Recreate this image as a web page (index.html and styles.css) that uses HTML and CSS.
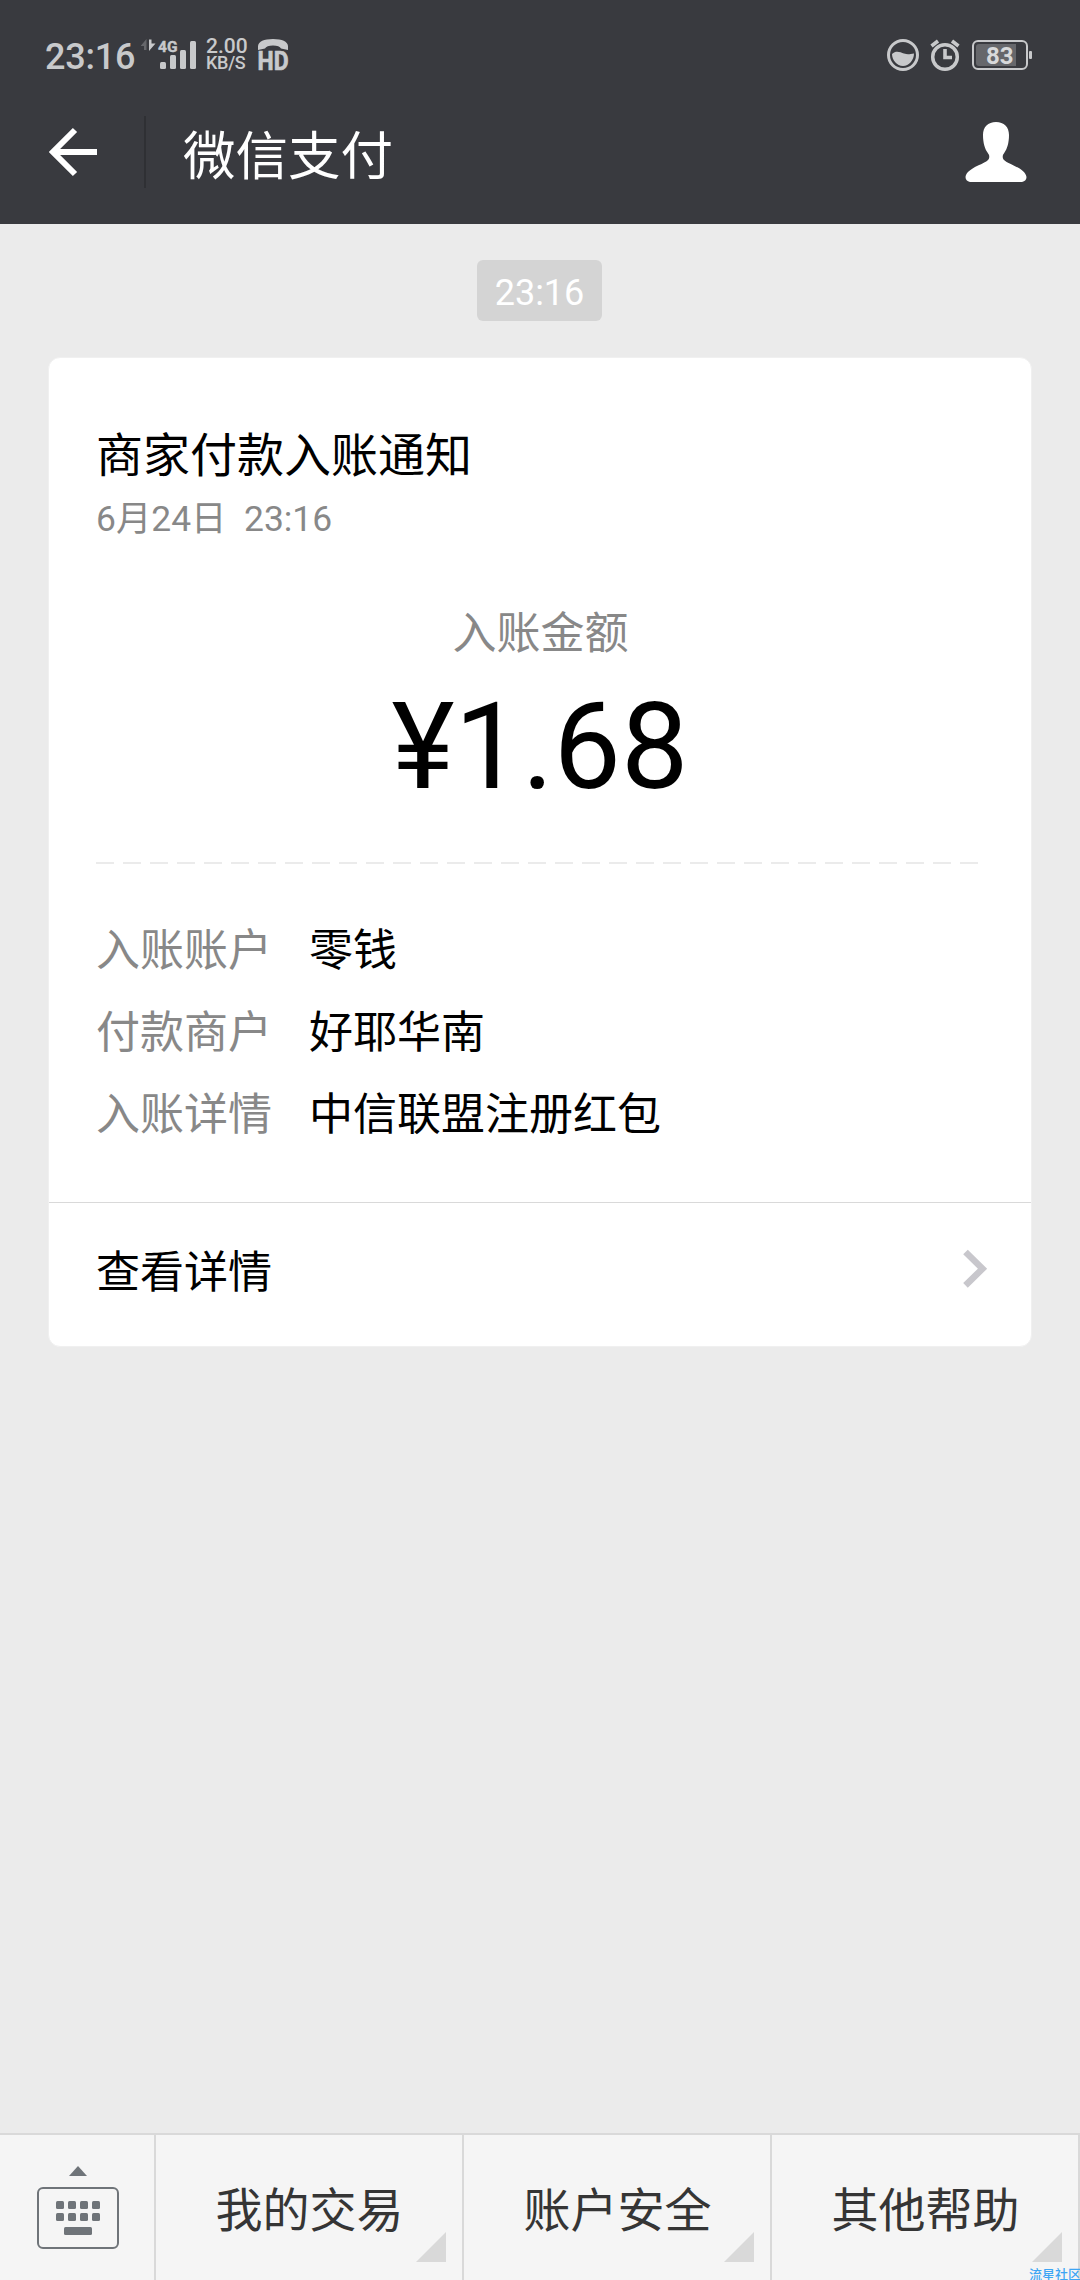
FILE: index.html
```html
<!DOCTYPE html>
<html lang="zh-CN">
<head>
<meta charset="utf-8">
<title>微信支付</title>
<link rel="stylesheet" href="styles.css">
</head>
<body>
<div class="screen">
  <header class="header">
    <div class="status">
      <span class="status-time">23:16</span>
      <svg class="status-signal" width="58" height="40" viewBox="141 35 58 40">
        <path d="M141 45.500L146.500 39V50H144V46H141z" fill="#66676b"/>
        <path d="M149 39.500H151.500V43.500H155.500L149 51z" fill="#c8c9cb"/>
        <text x="158" y="52" class="net-type">4G</text>
        <g fill="#c8c9cb">
          <rect x="160" y="62" width="6" height="7" rx="1.500"/>
          <rect x="170" y="55" width="6" height="14" rx="1.500"/>
          <rect x="180" y="50" width="6" height="19" rx="1.500"/>
          <rect x="190" y="41" width="6" height="28" rx="1.500"/>
        </g>
      </svg>
      <div class="speed"><span class="speed-value">2.00</span><span class="speed-unit">KB/S</span></div>
      <svg class="status-hd" width="34" height="40" viewBox="257 35 34 40">
        <path d="M258 50V46Q259 39 273 39T288 46V50L281 48.500Q279.500 45.500 273 45.500T265 48.500z" fill="#c8c9cb"/>
        <text x="257.500" y="69.800" class="hd" textLength="31" lengthAdjust="spacingAndGlyphs">HD</text>
      </svg>
      <svg class="status-icons" width="148" height="40" viewBox="886 35 148 40" fill="none" stroke="#c8c9cb">
        <circle cx="903" cy="55" r="14.500" stroke-width="3"/>
        <path d="M892 54C896 50 900 52 904 53.500S910 54 914 53.500C914 60 909 66 903 66S892 60 892 54z" fill="#c8c9cb" stroke="none"/>
        <circle cx="945" cy="57" r="12.300" stroke-width="3.500"/>
        <path d="M945 49V57.500H952" stroke-width="3.600"/>
        <path d="M931.500 46L938 41M958.500 46L952 41" stroke-width="3.600"/>
        <rect x="973" y="41" width="54" height="28" rx="5" stroke-width="2"/>
        <path d="M979 44H1016V66H979Q976 66 976 63V47Q976 44 979 44z" fill="#66676b" stroke="none"/>
        <rect x="1029" y="51" width="3" height="8" rx="1" fill="#c8c9cb" stroke="none"/>
        <text x="986" y="64" class="battery">83</text>
      </svg>
    </div>
    <div class="nav">
      <svg class="back" width="50" height="50" viewBox="48 127 50 50" fill="none" stroke="#fff" stroke-width="6"><path d="M75 130L53 152L75 174M54 152H97"/></svg>
      <i class="nav-line"></i>
      <h1 class="nav-title">微信支付</h1>
      <svg class="person" width="62" height="60" viewBox="965 122 62 60"><path d="M996 122C1004 122 1009 127 1009 135C1009 143 1007 149 1004.500 152.500Q1002 155.500 1003 158.500C1005 164 1025 167 1026.500 177Q1026.500 181 1022 182H970Q965.500 181 965.500 177C967 167 987 164 989 158.500Q990 155.500 987.500 152.500C985 149 983 143 983 135C983 127 988 122 996 122z" fill="#fff"/></svg>
    </div>
  </header>

  <main class="chat">
    <div class="stamp">23:16</div>
    <section class="card">
      <div class="card-main">
        <h2 class="card-title">商家付款入账通知</h2>
        <div class="card-date">6月24日  23:16</div>
        <div class="amount-label">入账金额</div>
        <div class="amount">¥1.68</div>
        <div class="dashes"></div>
        <dl class="details">
          <dt>入账账户</dt><dd>零钱</dd>
          <dt>付款商户</dt><dd>好耶华南</dd>
          <dt>入账详情</dt><dd>中信联盟注册红包</dd>
        </dl>
      </div>
      <div class="card-link">
        <span>查看详情</span>
        <svg width="26" height="40" viewBox="962 1249 26 40" fill="none" stroke="#c8c7cc" stroke-width="6.500"><path d="M965.500 1252L982.500 1268.700L965.500 1285.400"/></svg>
      </div>
    </section>
  </main>

  <footer class="menu">
    <div class="menu-key">
      <svg width="82" height="84" viewBox="37 2166 82 84" fill="#6f7479">
        <path d="M69 2176L78 2166L87 2176z"/>
        <rect x="38" y="2188" width="80" height="60" rx="5" fill="none" stroke="#6f7479" stroke-width="2"/>
        <rect x="56" y="2201" width="8" height="8" rx="1.500"/><rect x="68" y="2201" width="8" height="8" rx="1.500"/><rect x="80" y="2201" width="8" height="8" rx="1.500"/><rect x="92" y="2201" width="8" height="8" rx="1.500"/>
        <rect x="56" y="2213" width="8" height="8" rx="1.500"/><rect x="68" y="2213" width="8" height="8" rx="1.500"/><rect x="80" y="2213" width="8" height="8" rx="1.500"/><rect x="92" y="2213" width="8" height="8" rx="1.500"/>
        <rect x="64" y="2227" width="28" height="8" rx="1.500"/>
      </svg>
    </div>
    <div class="menu-item">我的交易</div>
    <div class="menu-item">账户安全</div>
    <div class="menu-item">其他帮助</div>
  </footer>
  <div class="watermark">流星社区</div>
</div>
</body>
</html>
```
FILE: styles.css
```css
* { box-sizing: border-box; margin: 0; padding: 0; }
body { background: #ebebeb; font-family: "Noto Sans CJK SC", sans-serif; }
.screen { position: relative; width: 1080px; height: 2280px; display: flex; flex-direction: column; overflow: hidden; }
h1, h2 { font-weight: 400; }
svg { display: block; flex: none; overflow: visible; }

/* Header */
.header { height: 224px; background: #393a3f; color: #fff; }
.status { height: 76px; padding: 35px 46px 0 45px; display: flex; align-items: flex-start; color: #c8c9cb; font-family: Roboto, sans-serif; }
.status-time { width: 96px; padding-top: 1px; font-size: 36px; line-height: 42px; font-weight: 500; letter-spacing: -0.2px; }
.status-signal { width: 58px; }
.speed { width: 52px; padding: 3px 0 0 7px; display: flex; flex-direction: column; font-weight: 500; }
.speed-value { font-size: 21px; line-height: 17px; }
.speed-unit { font-size: 18px; line-height: 16px; letter-spacing: -0.3px; }
.status-hd { margin-left: 6px; }
.status-icons { margin-left: auto; }
.net-type, .hd, .battery { fill: #c8c9cb; stroke: none; font-family: Roboto, sans-serif; font-weight: 700; }
.net-type { font-size: 15.5px; stroke: #c8c9cb; stroke-width: 0.4px; }
.hd { font-size: 25.5px; stroke: #c8c9cb; stroke-width: 0.7px; }
.battery { font-size: 24px; fill: #d8d9da; }

.nav { height: 148px; padding: 40px 53px 36px 48px; display: flex; }
.back { margin-top: 11px; }
.nav-line { width: 2px; height: 72px; margin-left: 46px; background: #2f3034; }
.nav-title { margin-left: 37px; font-size: 52.5px; line-height: 72px; }
.person { margin: 6px 0 0 auto; }

/* Conversation */
.chat { flex: 1; padding: 36px 48px 0; display: flex; flex-direction: column; align-items: center; }
.stamp { width: 125px; height: 61px; margin-right: 1px; border-radius: 6px; background: #d4d4d4; color: #fff; font: 36px/66px Roboto, sans-serif; text-align: center; }
.card { width: 984px; height: 990px; margin-top: 36px; border: 1px solid #f0f0f0; border-radius: 12px; background: #fff; color: #000; }
.card-main { height: 845px; padding: 64px 47px 0; border-bottom: 1px solid #d9d9d9; }
.card-title { font-size: 47px; line-height: 60px; }
.card-date { margin-top: 17px; font: 35.4px/40px Roboto, "Noto Sans CJK SC", sans-serif; color: #888; white-space: pre; }
.amount-label { margin-top: 61px; padding-left: 1px; font-size: 44px; line-height: 60px; color: #888; text-align: center; }
.amount { margin-top: 27px; font: 120px/120px Roboto, sans-serif; text-align: center; }
.dashes { height: 2px; margin-top: 55px; background: repeating-linear-gradient(90deg, #ebebeb 0 18px, transparent 18px 27px); }
.details { margin-top: 42px; display: grid; grid-template-columns: 213px 1fr; grid-auto-rows: 82px; font-size: 44px; line-height: 82px; }
.details dt { color: #888; }
.card-link { height: 131px; padding: 0 43px 0 47px; display: flex; align-items: center; justify-content: space-between; font-size: 44px; line-height: 60px; }

/* Bottom menu */
.menu { height: 147px; display: grid; grid-template-columns: 156px repeat(3, 308px); border-top: 2px solid #d9d9d9; background: #f5f5f5; }
.menu-key, .menu-item { border-right: 2px solid #d9d9d9; }
.menu-key { padding: 31px 0 0 37px; }
.menu-item { padding: 0 0 1px 1px; display: grid; place-items: center; font-size: 47px; line-height: 60px; color: #353535; position: relative; }
.menu-item::after { content: ""; position: absolute; right: 16px; bottom: 18px; width: 30px; height: 30px; background: #d9d9d9; clip-path: polygon(100% 0, 100% 100%, 0 100%); }

.watermark { position: absolute; right: -1px; bottom: -1px; font-size: 13px; line-height: 14px; font-weight: 500; color: #3da5f4; white-space: nowrap; }
```
